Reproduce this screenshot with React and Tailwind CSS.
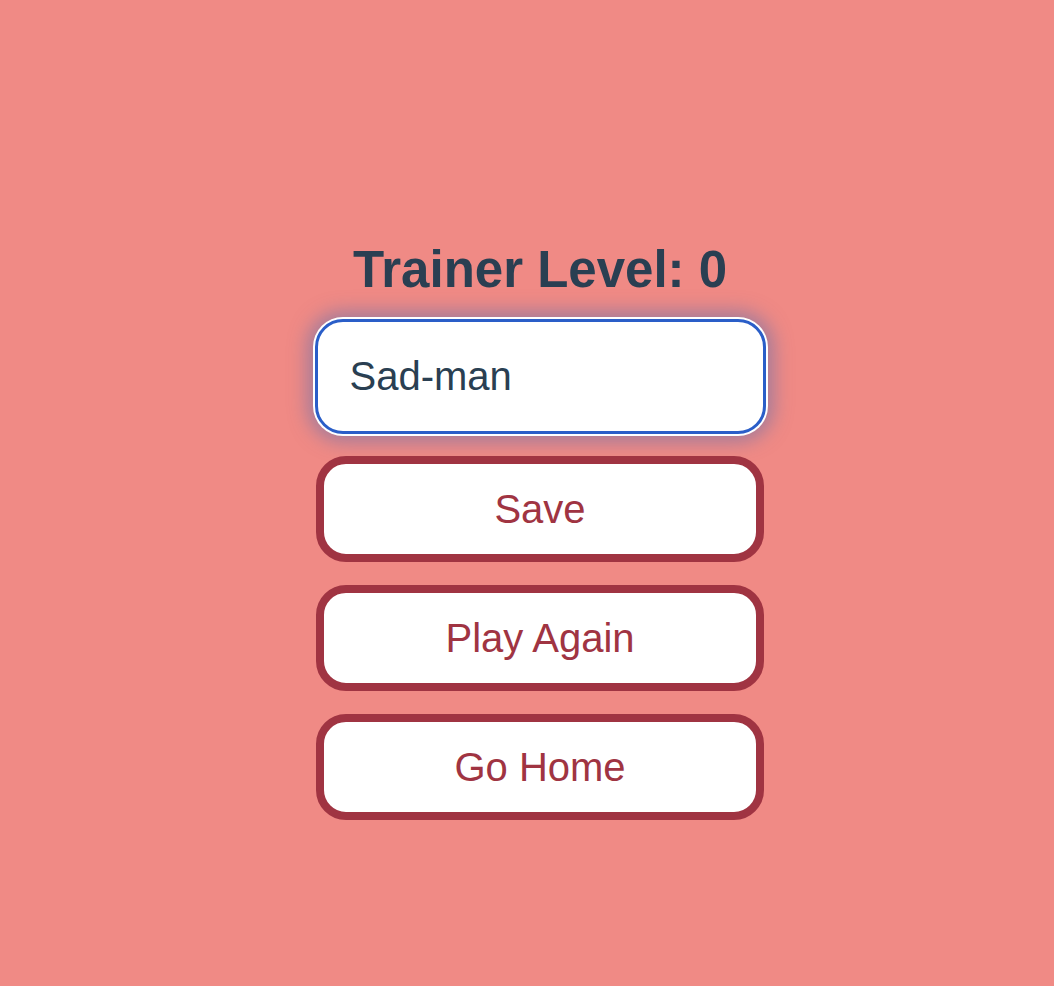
import React from "react";

export default function App() {
  return (
    <div className="min-h-[986px] w-full bg-[#F08A85] flex flex-col items-center pt-[244px] pl-[26px] font-['Liberation_Sans',Arial,Helvetica,sans-serif]">
      <h1 className="text-[51px] leading-none font-bold text-[#2A3F52] m-0">
        Trainer Level: 0
      </h1>
      <input
        defaultValue="Sad-man"
        className="mt-[24px] w-[451px] h-[115px] rounded-[28px] border-[3px] border-[#2A5EC8] bg-white pl-[32px] text-[40px] text-[#2A3F52] outline-none shadow-[0_0_0_2px_#ffffff,0_0_18px_8px_rgba(90,110,175,0.5)]"
      />
      <div className="mt-[22px] flex flex-col gap-[23px]">
        {["Save", "Play Again", "Go Home"].map((t) => (
          <button
            key={t}
            className="w-[448px] h-[106px] rounded-[30px] border-[8px] border-[#A03442] bg-white text-[40px] text-[#A03442] flex items-center justify-center"
          >
            {t}
          </button>
        ))}
      </div>
    </div>
  );
}
